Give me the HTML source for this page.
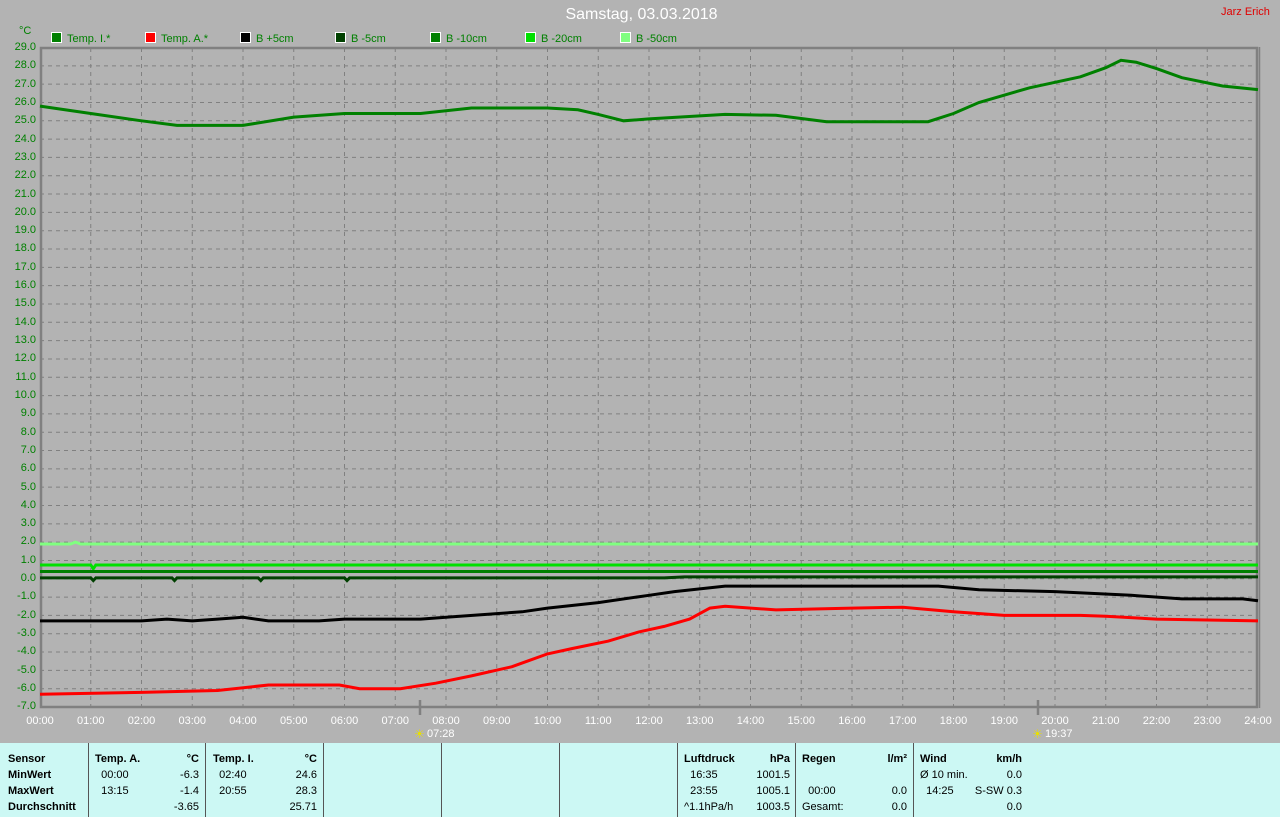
<!DOCTYPE html>
<html><head><meta charset="utf-8"><style>
body{margin:0;width:1280px;height:817px;background:#b3b3b3;position:relative;overflow:hidden;font-family:"Liberation Sans",sans-serif;font-size:11px}
.a{position:absolute;white-space:nowrap}
#yl{position:absolute;left:0;top:38px;width:36px;text-align:right;color:#008000}
#yl div{height:18.32px;line-height:18.32px}
#xl{position:absolute;left:14.6px;top:715px;display:flex;color:#fff}
#xl div{width:50.75px;text-align:center}
.lg{position:absolute;top:32px;color:#008000;font-size:11px}
.lg i{display:inline-block;width:9px;height:9px;border:1px solid #fff;vertical-align:-1px;margin-right:5px}
#tb{position:absolute;left:0;top:743px;width:1280px;height:74px;background:#ccf8f4}
.v{position:absolute;top:743px;width:1px;height:74px;background:#555}
.t{position:absolute;font-size:11px;color:#000;line-height:16px}
.b{font-weight:bold}
</style></head><body>
<div class="a" style="left:0;width:1283px;text-align:center;top:6px;font-size:16px;color:#fff">Samstag, 03.03.2018</div>
<div class="a" style="left:1221px;top:6px;color:#e00000">Jarz Erich</div>
<div class="a" style="left:19px;top:25px;color:#008000">°C</div>
<div class="lg" style="left:51px"><i style="background:#008000"></i>Temp. I.*</div>
<div class="lg" style="left:145px"><i style="background:#ff0000"></i>Temp. A.*</div>
<div class="lg" style="left:240px"><i style="background:#000"></i>B +5cm</div>
<div class="lg" style="left:335px"><i style="background:#004000"></i>B -5cm</div>
<div class="lg" style="left:430px"><i style="background:#008000"></i>B -10cm</div>
<div class="lg" style="left:525px"><i style="background:#00e000"></i>B -20cm</div>
<div class="lg" style="left:620px"><i style="background:#80ff80"></i>B -50cm</div>
<div id="yl"><div>29.0</div><div>28.0</div><div>27.0</div><div>26.0</div><div>25.0</div><div>24.0</div><div>23.0</div><div>22.0</div><div>21.0</div><div>20.0</div><div>19.0</div><div>18.0</div><div>17.0</div><div>16.0</div><div>15.0</div><div>14.0</div><div>13.0</div><div>12.0</div><div>11.0</div><div>10.0</div><div>9.0</div><div>8.0</div><div>7.0</div><div>6.0</div><div>5.0</div><div>4.0</div><div>3.0</div><div>2.0</div><div>1.0</div><div>0.0</div><div>-1.0</div><div>-2.0</div><div>-3.0</div><div>-4.0</div><div>-5.0</div><div>-6.0</div><div>-7.0</div></div>
<div id="xl"><div>00:00</div><div>01:00</div><div>02:00</div><div>03:00</div><div>04:00</div><div>05:00</div><div>06:00</div><div>07:00</div><div>08:00</div><div>09:00</div><div>10:00</div><div>11:00</div><div>12:00</div><div>13:00</div><div>14:00</div><div>15:00</div><div>16:00</div><div>17:00</div><div>18:00</div><div>19:00</div><div>20:00</div><div>21:00</div><div>22:00</div><div>23:00</div><div>24:00</div></div>
<div class="a" style="left:414px;top:727px;color:#e8e000;font-size:12px">☀</div>
<div class="a" style="left:427px;top:728px;color:#fff">07:28</div>
<div class="a" style="left:1032px;top:727px;color:#e8e000;font-size:12px">☀</div>
<div class="a" style="left:1045px;top:728px;color:#fff">19:37</div>
<svg id="s" class="a" style="left:0;top:0" width="1280" height="743"></svg>
<div id="tb"></div>
<div class="v" style="left:88px"></div><div class="v" style="left:205px"></div><div class="v" style="left:323px"></div><div class="v" style="left:441px"></div><div class="v" style="left:559px"></div><div class="v" style="left:677px"></div><div class="v" style="left:795px"></div><div class="v" style="left:913px"></div>
<div class="t b" style="left:8px;top:751px">Sensor<br>MinWert<br>MaxWert<br>Durchschnitt</div>
<div class="t" style="left:95px;top:751px"><b>Temp. A.</b><br>&nbsp;&nbsp;00:00<br>&nbsp;&nbsp;13:15</div>
<div class="t" style="left:150px;top:751px;width:49px;text-align:right"><b>°C</b><br>-6.3<br>-1.4<br>-3.65</div>
<div class="t" style="left:213px;top:751px"><b>Temp. I.</b><br>&nbsp;&nbsp;02:40<br>&nbsp;&nbsp;20:55</div>
<div class="t" style="left:268px;top:751px;width:49px;text-align:right"><b>°C</b><br>24.6<br>28.3<br>25.71</div>
<div class="t" style="left:684px;top:751px"><b>Luftdruck</b><br>&nbsp;&nbsp;16:35<br>&nbsp;&nbsp;23:55<br>^1.1hPa/h</div>
<div class="t" style="left:740px;top:751px;width:50px;text-align:right"><b>hPa</b><br>1001.5<br>1005.1<br>1003.5</div>
<div class="t" style="left:802px;top:751px"><b>Regen</b><br>&nbsp;<br>&nbsp;&nbsp;00:00<br>Gesamt:</div>
<div class="t" style="left:860px;top:751px;width:47px;text-align:right"><b>l/m²</b><br>&nbsp;<br>0.0<br>0.0</div>
<div class="t" style="left:920px;top:751px"><b>Wind</b><br>Ø 10 min.<br>&nbsp;&nbsp;14:25</div>
<div class="t" style="left:960px;top:751px;width:62px;text-align:right"><b>km/h</b><br>0.0<br>S-SW 0.3<br>0.0</div>
<script>
var s=document.getElementById('s'),ns='http://www.w3.org/2000/svg',h='';
function X(t){return 40+t*50.75}function Y(v){return 47.5+(29-v)*18.32}
for(var i=1;i<24;i++)h+='<line x1="'+X(i)+'" y1="48" x2="'+X(i)+'" y2="707" stroke="#808080" stroke-dasharray="4,4"/>';
for(var v=28;v>=-6;v--)h+='<line x1="40" y1="'+Y(v)+'" x2="1257" y2="'+Y(v)+'" stroke="#808080" stroke-dasharray="4,4"/>';
h+='<rect x="41" y="48" width="1216" height="659" fill="none" stroke="#808080" stroke-width="2.5"/><line x1="1259.5" y1="47" x2="1259.5" y2="708" stroke="#808080" stroke-width="1.5"/>';
h+='<line x1="420" y1="700" x2="420" y2="715" stroke="#808080" stroke-width="2.5"/><line x1="1038" y1="700" x2="1038" y2="715" stroke="#808080" stroke-width="2.5"/>';
function L(p,c){var a=[];for(var i=0;i<p.length;i+=2)a.push(X(p[i]).toFixed(1)+','+Y(p[i+1]).toFixed(1));h+='<polyline points="'+a.join(' ')+'" fill="none" stroke="'+c+'" stroke-width="3"/>';}
L([0,1.9,0.6,1.9,0.7,2.0,0.8,1.9,24,1.9],'#80ff80');
L([0,0.75,1,0.75,1.05,0.55,1.1,0.75,24,0.75],'#00e000');
L([0,0.4,24,0.4],'#008000');
L([0,0.05,1,0.05,1.05,-0.1,1.1,0.05,2.6,0.05,2.65,-0.1,2.7,0.05,4.3,0.05,4.35,-0.1,4.4,0.05,6,0.05,6.05,-0.1,6.1,0.05,12.3,0.05,12.7,0.1,24,0.1],'#004000');
L([0,25.8,1,25.4,2,25.0,2.7,24.75,4,24.75,5,25.2,6,25.4,7.5,25.4,8.5,25.7,10,25.7,10.6,25.6,11,25.35,11.5,25.0,12,25.1,13.5,25.35,14.5,25.3,15.5,24.95,17.5,24.95,18,25.4,18.5,26.0,19.5,26.8,20.5,27.4,21,27.9,21.3,28.3,21.6,28.2,22,27.85,22.5,27.35,23.3,26.9,24,26.7],'#008000');
L([0,-6.3,2,-6.2,3.5,-6.1,4.5,-5.8,5.9,-5.8,6.3,-6.0,7.1,-6.0,7.8,-5.7,8.5,-5.3,9.3,-4.8,9.6,-4.5,10,-4.1,10.5,-3.8,11.2,-3.4,11.8,-2.9,12.3,-2.6,12.8,-2.2,13.2,-1.6,13.5,-1.5,14.5,-1.7,16,-1.6,17,-1.55,18,-1.8,19,-2.0,20.5,-2.0,21,-2.05,22,-2.2,24,-2.3],'#ff0000');
L([0,-2.3,2,-2.3,2.5,-2.2,3,-2.3,3.5,-2.2,4,-2.1,4.5,-2.3,5.5,-2.3,6,-2.2,7.5,-2.2,8,-2.1,9,-1.9,9.5,-1.8,10,-1.6,11,-1.3,12,-0.9,12.5,-0.7,13,-0.55,13.5,-0.4,17.7,-0.4,18.5,-0.6,20,-0.7,21.5,-0.9,22.5,-1.1,23.7,-1.1,24,-1.2],'#000');
s.innerHTML=h;
</script>
</body></html>
